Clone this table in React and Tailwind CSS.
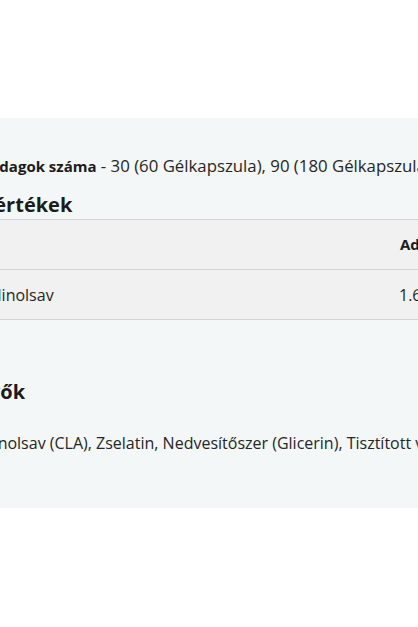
const App = () => {
  return (
    <div className="w-[418px] h-[627px] bg-white overflow-hidden" style={{ fontFamily: '"Open Sans", sans-serif' }}>
      <div className="mt-[118px] bg-[#f3f7f7] pt-[36px] pb-[53px] overflow-hidden text-[#1b1b1b]">
        {/* Adagok */}
        <p className="h-[24px] leading-[24px] text-[16.8px] text-[#262626] whitespace-nowrap -ml-[11px]">
          <span className="font-bold text-[15px] text-[#1b1b1b]">Adagok száma</span> - 30 (60 Gélkapszula), 90 (180 Gélkapszula)
        </p>

        {/* Tápértékek */}
        <h3 className="mt-[13px] h-[28px] leading-[28px] text-[20px] font-bold whitespace-nowrap -ml-[102px]">
          Tápanyagértékek
        </h3>

        {/* Tábla */}
        <div className="bg-[#f1f1f1] border-t border-[#d3d3d3] w-[700px]">
          <div className="h-[50px] border-b border-[#d3d3d3] flex items-center text-[15px] font-bold">
            <span className="ml-[400px] whitespace-nowrap">Adag</span>
          </div>
          <div className="h-[50px] border-b border-[#d3d3d3] flex items-center text-[16px] text-[#262626]">
            <span className="-ml-[77px] w-[476px] whitespace-nowrap">Konjugált linolsav</span>
            <span className="whitespace-nowrap">1.6 g</span>
          </div>
        </div>

        {/* Összetevők */}
        <h3 className="mt-[58px] h-[28px] leading-[28px] text-[20px] font-bold whitespace-nowrap -ml-[89px]">
          Összetevők
        </h3>

        <p className="mt-[25px] h-[24px] leading-[24px] text-[16px] text-[#262626] whitespace-nowrap -ml-[85px]">
          Konjugált linolsav (CLA), Zselatin, Nedvesítőszer (Glicerin), Tisztított víz
        </p>
      </div>
    </div>
  );
};

export default App;
